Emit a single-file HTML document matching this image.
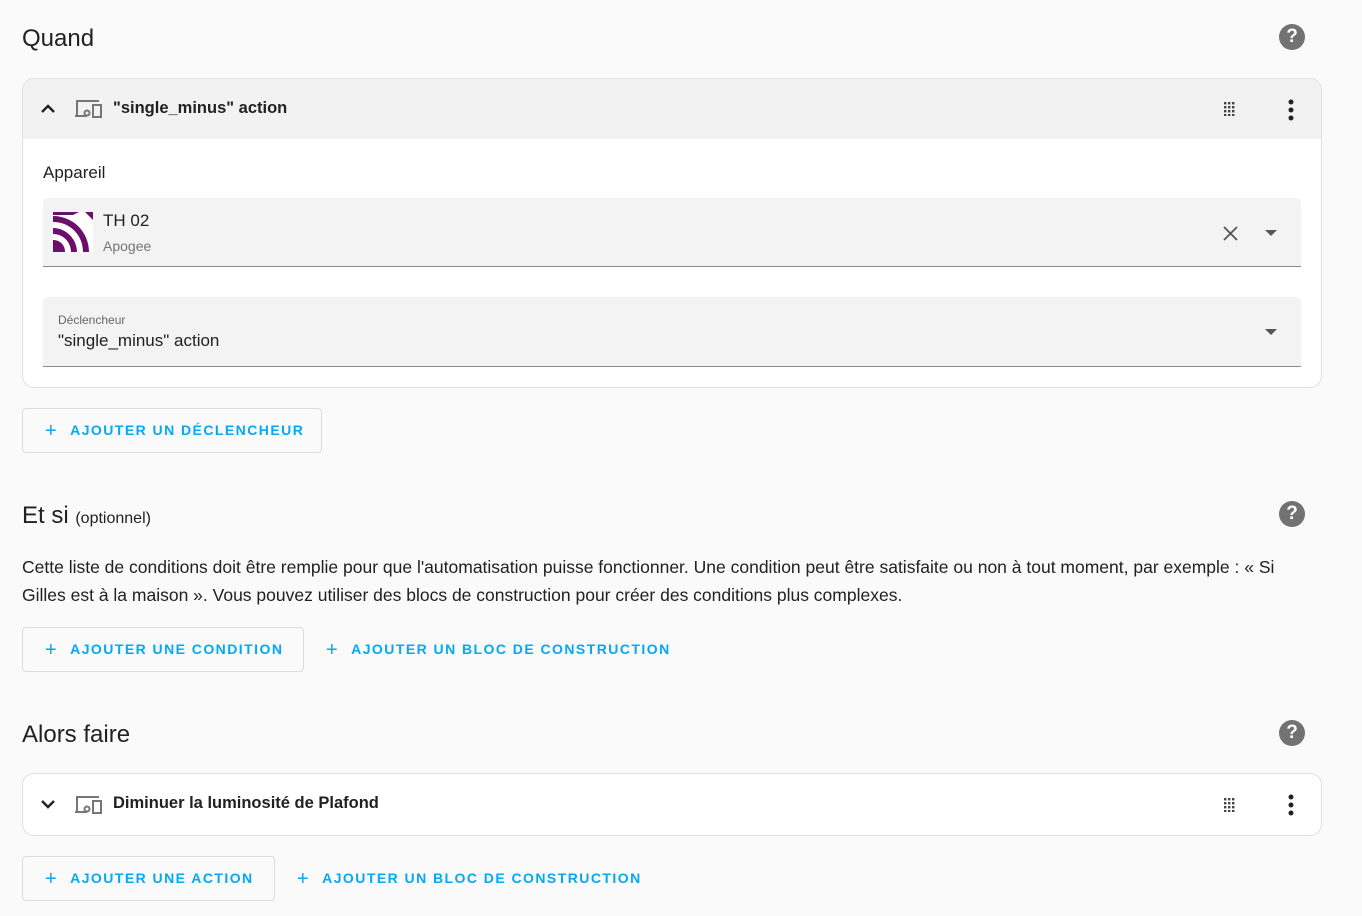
<!DOCTYPE html>
<html><head><meta charset="utf-8"><style>
*{box-sizing:border-box;margin:0;padding:0}
body{width:1362px;height:916px;background:#fafafa;font-family:"Liberation Sans",Roboto,sans-serif;color:#212121;position:relative;overflow:hidden}
.abs{position:absolute}
h2{position:absolute;left:22px;font-size:24px;font-weight:400;color:#212121}
.help{position:absolute;left:1279px;width:26px;height:26px;border-radius:50%;background:#727272;color:#fff;font-weight:700;font-size:19px;text-align:center;line-height:26px}
.card{position:absolute;left:22px;width:1300px;border:1px solid #e0e0e0;border-radius:12px;background:#fff;overflow:hidden}
.hdr{height:60px;position:relative;font-size:16.5px;font-weight:700}
.btn{position:absolute;height:45px;border:1px solid #dcdcdc;border-radius:4px;color:#03a9f4;font-size:14px;font-weight:700;letter-spacing:1.45px;line-height:43px;padding-left:22px}
.tbtn{position:absolute;color:#03a9f4;font-size:14px;font-weight:700;letter-spacing:1.45px;line-height:43px;height:45px}
.plus{font-weight:400;font-size:20px;margin-right:12px;vertical-align:-2px}
.field{position:absolute;left:20px;width:1258px;background:#f3f3f3;border-bottom:1px solid #8a8a8a;border-radius:4px 4px 0 0}
</style></head><body>
<h2 style="top:25px">Quand</h2>
<div class="help" style="top:24px">?</div>
<div class="card" style="top:78px;height:310px">
 <div class="hdr" style="background:#f2f2f2">
  <svg class="abs" style="left:16px;top:22px" width="18" height="14" viewBox="0 0 18 14"><path d="M3 11l6-6 6 6" fill="none" stroke="#222" stroke-width="2.4"/></svg>
  <svg class="abs" style="left:51px;top:19px" width="30" height="22" viewBox="0 0 30 22"><path d="M3 18V3h22" fill="none" stroke="#777" stroke-width="2"/><path d="M1 18h12" stroke="#777" stroke-width="2"/><rect x="19" y="7" width="8" height="12" fill="none" stroke="#777" stroke-width="2"/><circle cx="13" cy="15" r="2.5" fill="none" stroke="#777" stroke-width="2"/></svg>
  <div class="abs" style="left:90px;top:20px">"single_minus" action</div>
  <svg class="abs" style="left:1201px;top:23px" width="14" height="14" viewBox="0 0 14 14" fill="#444"><g><rect x="0" y="0" width="2.4" height="2.4"/><rect x="4" y="0" width="2.4" height="2.4"/><rect x="8" y="0" width="2.4" height="2.4"/><rect x="0" y="4" width="2.4" height="2.4"/><rect x="4" y="4" width="2.4" height="2.4"/><rect x="8" y="4" width="2.4" height="2.4"/><rect x="0" y="8" width="2.4" height="2.4"/><rect x="4" y="8" width="2.4" height="2.4"/><rect x="8" y="8" width="2.4" height="2.4"/><rect x="0" y="12" width="2.4" height="2"/><rect x="4" y="12" width="2.4" height="2"/><rect x="8" y="12" width="2.4" height="2"/></g></svg>
  <svg class="abs" style="left:1264px;top:20px" width="8" height="22" viewBox="0 0 8 22" fill="#222"><circle cx="4" cy="3" r="2.5"/><circle cx="4" cy="11" r="2.5"/><circle cx="4" cy="19" r="2.5"/></svg>
 </div>
 <div class="abs" style="left:20px;top:84px;font-size:17px">Appareil</div>
 <div class="field" style="top:119px;height:69px">
  <svg class="abs" style="left:10px;top:14px" width="40" height="40" viewBox="0 0 40 40"><rect width="40" height="40" fill="#fff"/><path d="M0 4C20 4 36 20 36 40h-6C30 23 17 10 0 10z" fill="#6b0f6b"/><path d="M0 16c13 0 24 11 24 24h-6c0-10-8-18-18-18z" fill="#6b0f6b"/><path d="M0 28c7 0 12 5 12 12H0z" fill="#6b0f6b"/><path d="M32 0h8v8z" fill="#6b0f6b"/><path d="M0 0h26L20 3H0z" fill="#6b0f6b"/></svg>
  <div class="abs" style="left:60px;top:13px;font-size:17px">TH 02</div>
  <div class="abs" style="left:60px;top:40px;font-size:14px;color:#757575">Apogee</div>
  <svg class="abs" style="left:1180px;top:28px" width="15" height="15" viewBox="0 0 15 15"><path d="M1 1l13 13M14 1L1 14" stroke="#555" stroke-width="1.8"/></svg>
  <svg class="abs" style="left:1222px;top:32px" width="12" height="6"><path d="M0 0h12L6 6z" fill="#555"/></svg>
 </div>
 <div class="field" style="top:218px;height:70px">
  <div class="abs" style="left:15px;top:16px;font-size:12px;color:#666">Déclencheur</div>
  <div class="abs" style="left:15px;top:34px;font-size:17px">"single_minus" action</div>
  <svg class="abs" style="left:1222px;top:32px" width="12" height="6"><path d="M0 0h12L6 6z" fill="#555"/></svg>
 </div>
</div>
<div class="btn" style="left:22px;top:408px;width:300px"><span class="plus">+</span>AJOUTER UN DÉCLENCHEUR</div>

<h2 style="top:502px">Et si <span style="font-size:16px">(optionnel)</span></h2>
<div class="help" style="top:501px">?</div>
<div class="abs" style="left:22px;top:553px;width:1262px;font-size:17.5px;line-height:28px">Cette liste de conditions doit être remplie pour que l'automatisation puisse fonctionner. Une condition peut être satisfaite ou non à tout moment, par exemple : « Si Gilles est à la maison ». Vous pouvez utiliser des blocs de construction pour créer des conditions plus complexes.</div>
<div class="btn" style="left:22px;top:627px;width:282px"><span class="plus">+</span>AJOUTER UNE CONDITION</div>
<div class="tbtn" style="left:326px;top:628px"><span class="plus">+</span>AJOUTER UN BLOC DE CONSTRUCTION</div>

<h2 style="top:721px">Alors faire</h2>
<div class="help" style="top:720px">?</div>
<div class="card" style="top:773px;height:63px">
 <div class="hdr">
  <svg class="abs" style="left:16px;top:24px" width="18" height="14" viewBox="0 0 18 14"><path d="M3 3l6 6 6-6" fill="none" stroke="#222" stroke-width="2.4"/></svg>
  <svg class="abs" style="left:51px;top:20px" width="30" height="22" viewBox="0 0 30 22"><path d="M3 18V3h22" fill="none" stroke="#777" stroke-width="2"/><path d="M1 18h12" stroke="#777" stroke-width="2"/><rect x="19" y="7" width="8" height="12" fill="none" stroke="#777" stroke-width="2"/><circle cx="13" cy="15" r="2.5" fill="none" stroke="#777" stroke-width="2"/></svg>
  <div class="abs" style="left:90px;top:20px">Diminuer la luminosité de Plafond</div>
  <svg class="abs" style="left:1201px;top:24px" width="14" height="14" viewBox="0 0 14 14" fill="#444"><rect x="0" y="0" width="2.4" height="2.4"/><rect x="4" y="0" width="2.4" height="2.4"/><rect x="8" y="0" width="2.4" height="2.4"/><rect x="0" y="4" width="2.4" height="2.4"/><rect x="4" y="4" width="2.4" height="2.4"/><rect x="8" y="4" width="2.4" height="2.4"/><rect x="0" y="8" width="2.4" height="2.4"/><rect x="4" y="8" width="2.4" height="2.4"/><rect x="8" y="8" width="2.4" height="2.4"/><rect x="0" y="12" width="2.4" height="2"/><rect x="4" y="12" width="2.4" height="2"/><rect x="8" y="12" width="2.4" height="2"/></svg>
  <svg class="abs" style="left:1264px;top:20px" width="8" height="22" viewBox="0 0 8 22" fill="#222"><circle cx="4" cy="3" r="2.5"/><circle cx="4" cy="11" r="2.5"/><circle cx="4" cy="19" r="2.5"/></svg>
 </div>
</div>
<div class="btn" style="left:22px;top:856px;width:253px"><span class="plus">+</span>AJOUTER UNE ACTION</div>
<div class="tbtn" style="left:297px;top:857px"><span class="plus">+</span>AJOUTER UN BLOC DE CONSTRUCTION</div>
</body></html>
